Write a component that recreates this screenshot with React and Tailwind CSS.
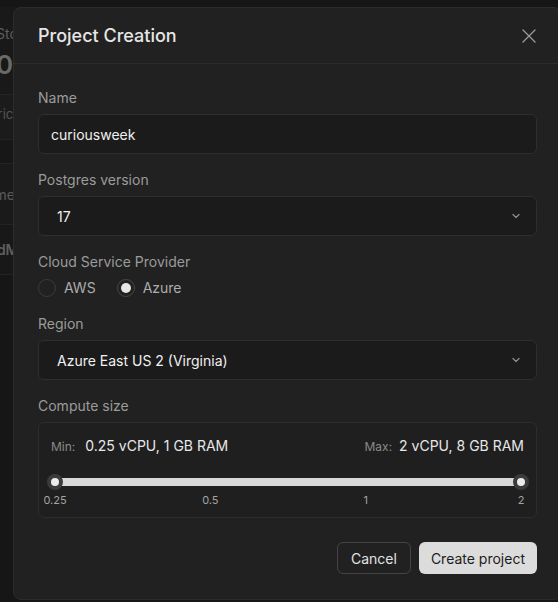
import React from "react";

function Chevron() {
  return (
    <svg width="12" height="12" viewBox="0 0 24 24" fill="none" stroke="#8c8c8c" strokeWidth="2.5" strokeLinecap="round" strokeLinejoin="round">
      <path d="M6 9l6 6 6-6" />
    </svg>
  );
}

function Field({ label, children }) {
  return (
    <div className="flex flex-col">
      <div className="text-[14px] leading-5 text-[#9b9b9b] mb-1.5">{label}</div>
      {children}
    </div>
  );
}

function Radio({ checked, label }) {
  return (
    <div className="flex items-center gap-2">
      <div className={"w-[18px] h-[18px] rounded-full border flex items-center justify-center " + (checked ? "border-[#474747]" : "border-[#3a3a3a]")}>
        {checked && <div className="w-[10px] h-[10px] rounded-full bg-[#e6e6e6]" />}
      </div>
      <span className="text-[14px] leading-5 text-[#acacac]">{label}</span>
    </div>
  );
}

function Thumb({ left }) {
  return (
    <div className="absolute top-1/2 -translate-y-1/2 -translate-x-1/2 w-4 h-4 rounded-full bg-[#3b3b3b] flex items-center justify-center" style={{ left }}>
      <div className="w-2 h-2 rounded-full bg-[#ececec]" />
    </div>
  );
}

export default function App() {
  const ticks = [
    ["0.25", "0%"],
    ["0.5", "33.333%"],
    ["1", "66.667%"],
    ["2", "100%"],
  ];
  return (
    <div className="relative w-[558px] h-[602px] overflow-hidden bg-[#161616]" style={{ fontFamily: "Inter, 'Noto Sans', sans-serif" }}>
      {/* background page */}
      <div className="flex flex-col pt-[7px] -ml-[4px] w-[300px] text-[#6b6b6b]">
        <div className="h-[88px] border-b border-[#252525] bg-[#191919] flex flex-col pt-[17px]">
          <div className="text-[14px] leading-5 text-[#5e5e5e]">Storage</div>
          <div className="text-[26px] leading-8 font-semibold text-[#6a6a6a] mt-[5px]">0</div>
        </div>
        <div className="h-[45px] border-b border-[#232323] bg-[#1b1b1b] flex items-start pt-[10px]">
          <span className="text-[13px] leading-[18px] text-[#555] -ml-[22px]">Metric</span>
        </div>
        <div className="h-[23px] bg-[#171717]" />
        <div className="h-[62px] border-y border-[#232323] bg-[#1a1a1a] flex items-center">
          <span className="text-[14px] text-[#5a5a5a] -ml-[20px]">Name</span>
        </div>
        <div className="h-[50px] border-b border-[#232323] bg-[#181818] flex items-center">
          <span className="text-[14px] font-semibold text-[#5f5f5f] -ml-[3px]">IdMain</span>
        </div>
        <div className="flex-1 bg-[#161616]" />
      </div>

      {/* modal */}
      <div className="absolute left-[13px] top-[7px] w-[549px] h-[593px] rounded-lg border border-[#2c2c2c] bg-[#212121] flex flex-col">
        <div className="h-[56px] border-b border-[#2c2c2c] flex items-center justify-between pl-6 pr-[25px] shrink-0">
          <div className="text-[18px] leading-7 text-[#e6e6e6] font-medium">Project Creation</div>
          <svg width="14" height="14" viewBox="0 0 14 14" fill="none" stroke="#9a9a9a" strokeWidth="1.3" strokeLinecap="round">
            <path d="M1 1l12 12M13 1L1 13" />
          </svg>
        </div>

        <div className="flex flex-col px-6 pt-6 pb-6 gap-4">
          <Field label="Name">
            <div className="h-10 rounded-md border border-[#2e2e2e] bg-[#1b1b1b] flex items-center px-3">
              <span className="text-[14px] text-[#f0f0f0]">curiousweek</span>
            </div>
          </Field>

          <Field label="Postgres version">
            <div className="h-10 rounded-md border border-[#2e2e2e] bg-[#1b1b1b] flex items-center justify-between pl-[18px] pr-[14px]">
              <span className="text-[14px] text-[#f0f0f0]">17</span>
              <Chevron />
            </div>
          </Field>

          <div className="flex flex-col">
            <div className="text-[14px] leading-5 text-[#9b9b9b] mb-[6px]">Cloud Service Provider</div>
            <div className="flex items-center gap-[21px]">
              <Radio label="AWS" />
              <Radio label="Azure" checked />
            </div>
          </div>

          <Field label="Region">
            <div className="h-10 rounded-md border border-[#2e2e2e] bg-[#1b1b1b] flex items-center justify-between pl-[18px] pr-[14px]">
              <span className="text-[14px] text-[#f0f0f0]">Azure East US 2 (Virginia)</span>
              <Chevron />
            </div>
          </Field>

          <Field label="Compute size">
            <div className="h-24 rounded-md border border-[#2c2c2c] bg-[#1f1f1f] flex flex-col pt-[12px]">
              <div className="flex items-center justify-between px-3">
                <div className="flex items-baseline gap-[10px]">
                  <span className="text-[12px] text-[#8a8a8a]">Min:</span>
                  <span className="text-[14px] text-[#e8e8e8]">0.25 vCPU, 1 GB RAM</span>
                </div>
                <div className="flex items-baseline gap-[7px]">
                  <span className="text-[12px] text-[#8a8a8a]">Max:</span>
                  <span className="text-[14px] text-[#e8e8e8]">2 vCPU, 8 GB RAM</span>
                </div>
              </div>
              <div className="pl-4 pr-[15px] mt-[22px]">
                <div className="relative h-2">
                  <div className="h-2 rounded-full bg-[#d9d9d9]" />
                  <Thumb left="0%" />
                  <Thumb left="100%" />
                </div>
                <div className="relative h-4 mt-[6px]">
                  {ticks.map(([t, p]) => (
                    <span key={t} className="absolute top-0 -translate-x-1/2 text-[11px] leading-4 text-[#a3a3a3]" style={{ left: p }}>
                      {t}
                    </span>
                  ))}
                </div>
              </div>
            </div>
          </Field>

          <div className="flex justify-end gap-2 mt-[8px]">
            <div className="h-8 px-[13px] rounded-md border border-[#444] flex items-center text-[14px] text-[#e2e2e2]">Cancel</div>
            <div className="h-8 px-3 rounded-md bg-[#dcdcdc] flex items-center text-[14px] text-[#1c1c1c]">Create project</div>
          </div>
        </div>
      </div>
    </div>
  );
}
